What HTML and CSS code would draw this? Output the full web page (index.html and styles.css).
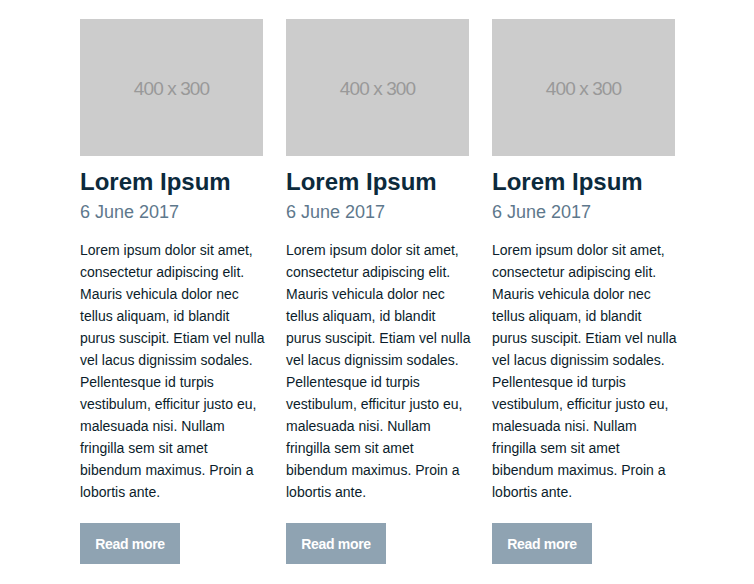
FILE: index.html
```html
<!DOCTYPE html>
<html lang="en">
<head>
<meta charset="utf-8">
<title>Posts</title>
<link rel="stylesheet" href="styles.css">
</head>
<body>
<main class="posts">
  <article class="post">
    <div class="thumb"><span>400 x 300</span></div>
    <h2 class="title">Lorem Ipsum</h2>
    <p class="date">6 June 2017</p>
    <p class="excerpt">Lorem ipsum dolor sit amet, consectetur adipiscing elit. Mauris vehicula dolor nec tellus aliquam, id blandit purus suscipit. Etiam vel nulla vel lacus dignissim sodales. Pellentesque id turpis vestibulum, efficitur justo eu, malesuada nisi. Nullam fringilla sem sit amet bibendum maximus. Proin a lobortis ante.</p>
    <a class="btn" href="#">Read more</a>
  </article>
  <article class="post">
    <div class="thumb"><span>400 x 300</span></div>
    <h2 class="title">Lorem Ipsum</h2>
    <p class="date">6 June 2017</p>
    <p class="excerpt">Lorem ipsum dolor sit amet, consectetur adipiscing elit. Mauris vehicula dolor nec tellus aliquam, id blandit purus suscipit. Etiam vel nulla vel lacus dignissim sodales. Pellentesque id turpis vestibulum, efficitur justo eu, malesuada nisi. Nullam fringilla sem sit amet bibendum maximus. Proin a lobortis ante.</p>
    <a class="btn" href="#">Read more</a>
  </article>
  <article class="post">
    <div class="thumb"><span>400 x 300</span></div>
    <h2 class="title">Lorem Ipsum</h2>
    <p class="date">6 June 2017</p>
    <p class="excerpt">Lorem ipsum dolor sit amet, consectetur adipiscing elit. Mauris vehicula dolor nec tellus aliquam, id blandit purus suscipit. Etiam vel nulla vel lacus dignissim sodales. Pellentesque id turpis vestibulum, efficitur justo eu, malesuada nisi. Nullam fringilla sem sit amet bibendum maximus. Proin a lobortis ante.</p>
    <a class="btn" href="#">Read more</a>
  </article>
</main>
</body>
</html>
```

FILE: styles.css
```css
html, body {
  margin: 0;
  padding: 0;
  background: #ffffff;
}

body {
  font-family: "Liberation Sans", Arial, Helvetica, sans-serif;
  color: #0b1d2b;
}

.posts {
  display: flex;
  gap: 20px;
  padding: 19px 0 0 80px;
}

.post {
  width: 186px;
  display: flex;
  flex-direction: column;
  align-items: flex-start;
}

.thumb {
  width: 183px;
  height: 137px;
  background: #cccccc;
  display: flex;
  align-items: center;
  justify-content: center;
}

.thumb span {
  color: #999999;
  font-size: 19px;
  letter-spacing: -0.9px;
  margin-top: 3px;
}

.title {
  margin: 12px 0 0;
  font-size: 24px;
  font-weight: bold;
  line-height: 28px;
  color: #0c2a3c;
}

.date {
  margin: 6px 0 0;
  font-size: 18px;
  line-height: 21px;
  color: #5e788c;
}

.excerpt {
  margin: 16px 0 0;
  font-size: 14px;
  line-height: 22px;
  color: #0b1d2b;
}

.btn {
  margin-top: 20px;
  width: 100px;
  height: 41px;
  background: #8fa3b2;
  color: #ffffff;
  font-size: 14px;
  font-weight: bold;
  letter-spacing: -0.3px;
  text-decoration: none;
  display: flex;
  align-items: center;
  justify-content: center;
}
```
